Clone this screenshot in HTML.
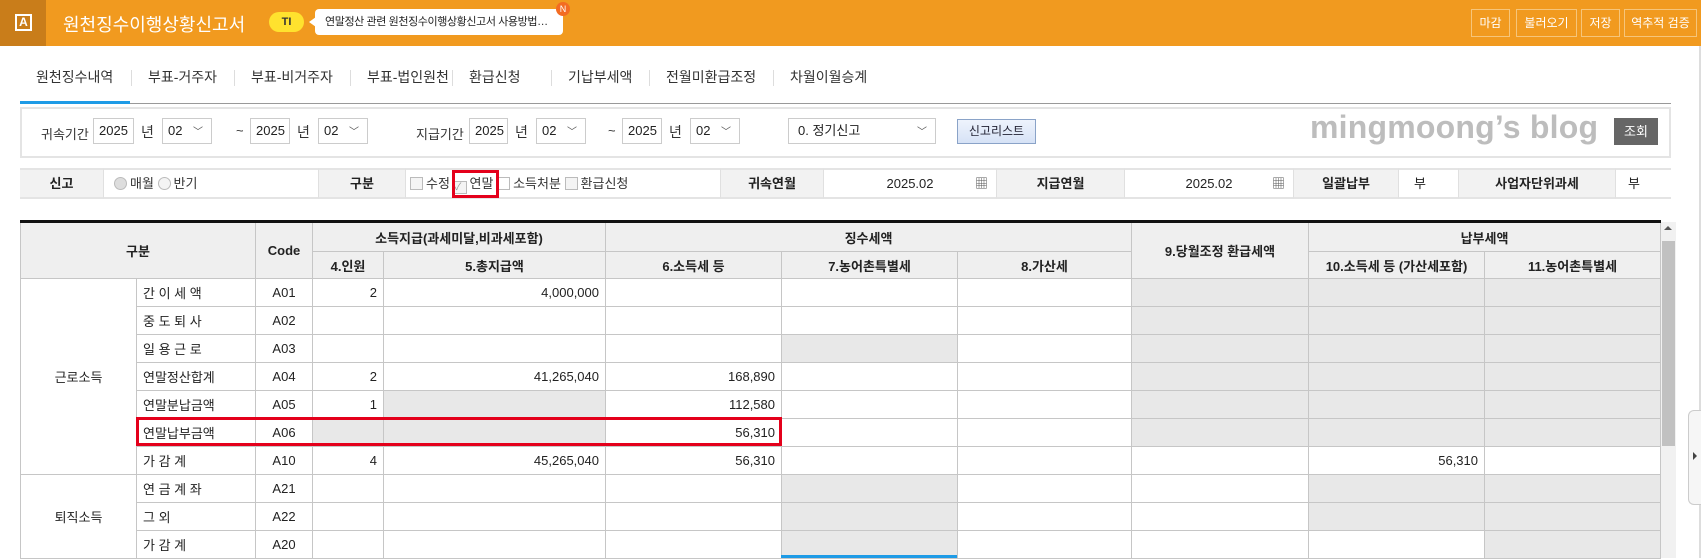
<!DOCTYPE html>
<html><head><meta charset="utf-8">
<style>
*{box-sizing:border-box;margin:0;padding:0;white-space:nowrap}
body{width:1701px;height:558px;overflow:hidden;background:#fff;position:relative;font-family:"Liberation Sans","Noto Sans CJK KR",sans-serif;font-size:13px;color:#222}
.a{position:absolute}
.hdr{left:0;top:0;width:1701px;height:46px;background:#f19a1f}
.sq{left:0;top:0;width:46px;height:46px;background:#c97d1a}
.btn{top:9px;height:28px;border:1px solid #f6c57a;color:#fff;font-size:12px;line-height:26px;text-align:center}
.tab{top:66px;font-size:14px;color:#333}
.sep{top:68px;width:1px;height:16px;background:#ddd}
.inp{height:26px;border:1px solid #ccc;background:#fff;font-size:13px;line-height:24px;padding-left:5px}
.lbl{font-size:13px;color:#333}
.chev{position:absolute;right:8px;top:2px;font-size:10px;color:#555}
.r2{top:168px;height:31px;border-top:2px solid #e4e4e4;border-bottom:2px solid #e4e4e4;font-size:13px;line-height:27px}
.h{background:#f2f2f2;font-weight:bold;text-align:center;border-right:1px solid #e0e0e0}
.v{border-right:1px solid #e0e0e0}
table{border-collapse:collapse;table-layout:fixed;position:absolute;left:20px;top:220px;border-top:3px solid #111}
td{border:1px solid #c6c6c6;height:28px;font-size:13px;padding:0 6px}
th{border:1px solid #c6c6c6;background:#efefef;font-size:13px;font-weight:bold}
.g{background:#e8e8e8}
.n{text-align:right}
.c{text-align:center}
.cb{display:inline-block;width:13px;height:13px;border:1px solid #bbb;background:#f4f4f4;vertical-align:-2px;margin-right:3px}
</style></head><body>
<div class="a hdr"></div>
<div class="a sq"></div>
<div class="a" style="left:15px;top:14px;width:17px;height:17px;border:2px solid #fff;color:#fff;font-size:12px;line-height:13px;text-align:center;font-weight:bold">A</div>
<div class="a" style="left:63px;top:11px;color:#fff;font-size:18px">원천징수이행상황신고서</div>
<div class="a" style="left:269px;top:12px;width:35px;height:20px;border-radius:10px;background:#ffe22e;color:#333;font-size:11px;font-weight:bold;text-align:center;line-height:20px">TI</div>
<div class="a" style="left:315px;top:9px;width:248px;height:26px;background:#fff;border-radius:4px;font-size:11px;line-height:26px;padding-left:10px;color:#222;letter-spacing:-0.4px;overflow:hidden">연말정산 관련 원천징수이행상황신고서 사용방법…</div>
<div class="a" style="left:309px;top:17px;width:0;height:0;border-top:5px solid transparent;border-bottom:5px solid transparent;border-right:7px solid #fff"></div>
<div class="a" style="left:556px;top:2px;width:14px;height:14px;border-radius:7px;background:#f36c22;color:#fff;font-size:9px;text-align:center;line-height:14px">N</div>
<div class="a btn" style="left:1471px;width:39px">마감</div>
<div class="a btn" style="left:1516px;width:61px">불러오기</div>
<div class="a btn" style="left:1581px;width:39px">저장</div>
<div class="a btn" style="left:1624px;width:73px">역추적 검증</div>

<div class="a tab" style="left:36px;top:67px">원천징수내역</div>
<div class="a sep" style="left:131px;top:70px"></div>
<div class="a tab" style="left:148px;top:67px">부표-거주자</div>
<div class="a sep" style="left:234px;top:70px"></div>
<div class="a tab" style="left:251px;top:67px">부표-비거주자</div>
<div class="a sep" style="left:350px;top:70px"></div>
<div class="a tab" style="left:367px;top:67px">부표-법인원천</div>
<div class="a sep" style="left:452px;top:70px"></div>
<div class="a tab" style="left:469px;top:67px">환급신청</div>
<div class="a sep" style="left:551px;top:70px"></div>
<div class="a tab" style="left:568px;top:67px">기납부세액</div>
<div class="a sep" style="left:649px;top:70px"></div>
<div class="a tab" style="left:666px;top:67px">전월미환급조정</div>
<div class="a sep" style="left:773px;top:70px"></div>
<div class="a tab" style="left:790px;top:67px">차월이월승계</div>
<div class="a" style="left:20px;top:103px;width:1651px;height:1px;background:#999"></div>
<div class="a" style="left:20px;top:101px;width:110px;height:3px;background:#1e9be6"></div>

<div class="a" style="left:20px;top:107px;width:1651px;height:51px;border:2px solid #e4e4e4"></div>
<div class="a lbl" style="left:41px;top:124px">귀속기간</div>
<div class="a inp" style="left:93px;top:118px;width:41px">2025</div>
<div class="a lbl" style="left:141px;top:122px;font-size:14px">년</div>
<div class="a inp" style="left:162px;top:118px;width:50px">02<span class="chev">﹀</span></div>
<div class="a lbl" style="left:236px;top:123px">~</div>
<div class="a inp" style="left:250px;top:118px;width:40px">2025</div>
<div class="a lbl" style="left:297px;top:122px;font-size:14px">년</div>
<div class="a inp" style="left:318px;top:118px;width:50px">02<span class="chev">﹀</span></div>
<div class="a lbl" style="left:416px;top:124px">지급기간</div>
<div class="a inp" style="left:469px;top:118px;width:39px">2025</div>
<div class="a lbl" style="left:515px;top:122px;font-size:14px">년</div>
<div class="a inp" style="left:536px;top:118px;width:50px">02<span class="chev">﹀</span></div>
<div class="a lbl" style="left:608px;top:123px">~</div>
<div class="a inp" style="left:622px;top:118px;width:40px">2025</div>
<div class="a lbl" style="left:669px;top:122px;font-size:14px">년</div>
<div class="a inp" style="left:690px;top:118px;width:50px">02<span class="chev">﹀</span></div>
<div class="a inp" style="left:788px;top:118px;width:148px;padding-left:9px">0. 정기신고<span class="chev">﹀</span></div>
<div class="a" style="left:957px;top:119px;width:79px;height:25px;border:1px solid #8aa3c8;background:linear-gradient(#eef3fc,#d6e2f6);font-size:12px;text-align:center;line-height:23px;color:#223">신고리스트</div>
<div class="a" style="left:1310px;top:109px;font-size:32px;font-weight:bold;color:#bdbdbd;letter-spacing:0.2px">mingmoong’s blog</div>
<div class="a" style="left:1614px;top:118px;width:44px;height:27px;background:#666;color:#fff;font-size:13px;text-align:center;line-height:27px">조회</div>

<div class="a r2" style="left:20px;width:1651px"></div>
<div class="a r2 h" style="left:20px;width:84px">신고</div>
<div class="a r2 v" style="left:104px;width:215px;padding-left:10px;color:#333"><span class="cb" style="border-radius:7px;background:#ddd"></span>매월 <span class="cb" style="border-radius:7px"></span>반기</div>
<div class="a r2 h" style="left:319px;width:87px">구분</div>
<div class="a r2 v" style="left:406px;width:315px;padding-left:4px;color:#333"><span class="cb"></span>수정 <span class="cb" style="color:#999;font-size:10px;line-height:11px">✓</span>연말 <span class="cb" style="background:#fff"></span>소득처분 <span class="cb"></span>환급신청</div>
<div class="a r2 h" style="left:721px;width:103px">귀속연월</div>
<div class="a r2 v" style="left:824px;width:173px;text-align:center">2025.02<span style="position:absolute;right:8px;top:0;font-size:13px;color:#555">▦</span></div>
<div class="a r2 h" style="left:997px;width:128px">지급연월</div>
<div class="a r2 v" style="left:1125px;width:169px;text-align:center">2025.02<span style="position:absolute;right:8px;top:0;font-size:13px;color:#555">▦</span></div>
<div class="a r2 h" style="left:1294px;width:105px">일괄납부</div>
<div class="a r2 v" style="left:1399px;width:60px;padding-left:15px">부</div>
<div class="a r2 h" style="left:1459px;width:157px">사업자단위과세</div>
<div class="a r2" style="left:1616px;width:55px;padding-left:12px">부</div>
<div class="a" style="left:452px;top:170px;width:47px;height:28px;border:3px solid #e4001b"></div>

<table>
<colgroup><col style="width:116px"><col style="width:119px"><col style="width:57px"><col style="width:71px"><col style="width:222px"><col style="width:176px"><col style="width:176px"><col style="width:174px"><col style="width:177px"><col style="width:176px"><col style="width:176px"></colgroup>
<tr style="height:30px"><th colspan="2" rowspan="2">구분</th><th rowspan="2">Code</th><th colspan="2">소득지급(과세미달,비과세포함)</th><th colspan="3">징수세액</th><th rowspan="2">9.당월조정 환급세액</th><th colspan="2">납부세액</th></tr>
<tr style="height:27px"><th>4.인원</th><th>5.총지급액</th><th>6.소득세 등</th><th>7.농어촌특별세</th><th>8.가산세</th><th>10.소득세 등 (가산세포함)</th><th>11.농어촌특별세</th></tr>
<tr><td rowspan="7" class="c">근로소득</td><td>간 이 세 액</td><td class="c">A01</td><td class="n">2</td><td class="n">4,000,000</td><td></td><td></td><td></td><td class="g"></td><td class="g"></td><td class="g"></td></tr>
<tr><td>중 도 퇴 사</td><td class="c">A02</td><td></td><td></td><td></td><td></td><td></td><td class="g"></td><td class="g"></td><td class="g"></td></tr>
<tr><td>일 용 근 로</td><td class="c">A03</td><td></td><td></td><td></td><td class="g"></td><td></td><td class="g"></td><td class="g"></td><td class="g"></td></tr>
<tr><td>연말정산합계</td><td class="c">A04</td><td class="n">2</td><td class="n">41,265,040</td><td class="n">168,890</td><td></td><td></td><td class="g"></td><td class="g"></td><td class="g"></td></tr>
<tr><td>연말분납금액</td><td class="c">A05</td><td class="n">1</td><td class="g"></td><td class="n">112,580</td><td></td><td></td><td class="g"></td><td class="g"></td><td class="g"></td></tr>
<tr><td>연말납부금액</td><td class="c">A06</td><td class="g"></td><td class="g"></td><td class="n">56,310</td><td></td><td></td><td class="g"></td><td class="g"></td><td class="g"></td></tr>
<tr><td>가 감 계</td><td class="c">A10</td><td class="n">4</td><td class="n">45,265,040</td><td class="n">56,310</td><td></td><td></td><td></td><td class="n">56,310</td><td></td></tr>
<tr><td rowspan="3" class="c">퇴직소득</td><td>연 금 계 좌</td><td class="c">A21</td><td></td><td></td><td></td><td class="g"></td><td></td><td></td><td class="g"></td><td class="g"></td></tr>
<tr><td>그 외</td><td class="c">A22</td><td></td><td></td><td></td><td class="g"></td><td></td><td></td><td class="g"></td><td class="g"></td></tr>
<tr><td>가 감 계</td><td class="c">A20</td><td></td><td></td><td></td><td class="g"></td><td></td><td></td><td></td><td class="g"></td></tr>
</table>
<div class="a" style="left:136px;top:417px;width:646px;height:29px;border:3px solid #e4001b"></div>
<div class="a" style="left:781px;top:555px;width:176px;height:3px;background:#1e9be6"></div>

<div class="a" style="left:1661px;top:222px;width:15px;height:336px;background:#f1f1f1"></div>
<div class="a" style="left:1664px;top:226px;width:0;height:0;border-left:4px solid transparent;border-right:4px solid transparent;border-bottom:4px solid #555"></div>
<div class="a" style="left:1662px;top:241px;width:13px;height:205px;background:#c1c1c1"></div>
<div class="a" style="left:1699px;top:46px;width:2px;height:512px;background:#ddd"></div>
<div class="a" style="left:1688px;top:410px;width:13px;height:95px;border:1px solid #ccc;border-right:none;background:#f6f6f6;border-radius:6px 0 0 6px"></div>
<div class="a" style="left:1693px;top:452px;width:0;height:0;border-top:4px solid transparent;border-bottom:4px solid transparent;border-left:4px solid #444"></div>
</body></html>
